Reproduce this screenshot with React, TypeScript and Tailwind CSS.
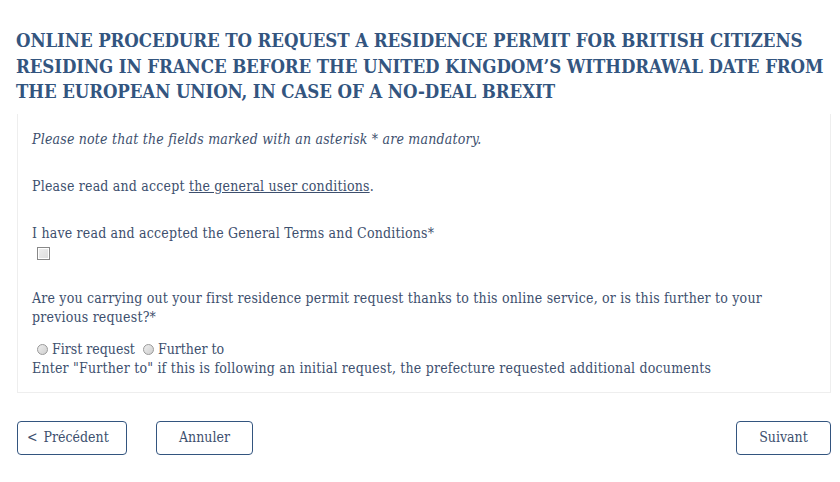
import React from "react";

const font = { fontFamily: '"Roboto Slab", "DejaVu Serif Condensed", "DejaVu Serif", serif' };

export default function App() {
  return (
    <div className="w-[840px] h-[482px] bg-white text-[#3d4f6e]" style={font}>
      <div className="pl-4 pr-[4px] pt-[28px]">
        <h1 className="text-[18.5px] leading-[25.5px] font-bold text-[#33557f] tracking-[-0.1px]">
          ONLINE PROCEDURE TO REQUEST A RESIDENCE PERMIT FOR BRITISH CITIZENS RESIDING IN FRANCE BEFORE THE UNITED KINGDOM’S WITHDRAWAL DATE FROM THE EUROPEAN UNION, IN CASE OF A NO-DEAL BREXIT
        </h1>
      </div>
      <div className="ml-[17px] mr-[9px] mt-[9px] border-x border-b border-[#eeeeee] px-[14px] pt-[16px] pb-[14px] text-[14px] leading-[19px] tracking-[0.2px]">
        <p className="italic">Please note that the fields marked with an asterisk * are mandatory.</p>
        <p className="mt-[28px]">
          Please read and accept <span className="underline">the general user conditions</span>.
        </p>
        <div className="mt-[28px]">
          <div>I have read and accepted the General Terms and Conditions*</div>
          <div className="mt-[4px] ml-[5px] w-[13px] h-[13px] border border-[#888] bg-gradient-to-br from-[#f0f0f0] to-[#dcdcdc] shadow-[inset_0_0_0_1px_#fff]"></div>
        </div>
        <div className="mt-[29px]">
          <div>Are you carrying out your first residence permit request thanks to this online service, or is this further to your previous request?*</div>
          <div className="mt-[13px] flex items-center ml-[5px] tracking-normal">
            <span className="inline-block w-[11px] h-[11px] rounded-full border border-[#999] bg-gradient-to-br from-[#eee] to-[#cfcfcf] mr-[4px]"></span>
            <span>First request</span>
            <span className="inline-block w-[11px] h-[11px] rounded-full border border-[#999] bg-gradient-to-br from-[#eee] to-[#cfcfcf] ml-[8px] mr-[4px]"></span>
            <span>Further to</span>
          </div>
          <div>Enter "Further to" if this is following an initial request, the prefecture requested additional documents</div>
        </div>
      </div>
      <div className="flex items-center mt-[28px] px-[17px] pr-[9px]">
        <button className="h-[34px] w-[110px] border border-[#33557f] rounded-[4px] text-[14px] text-[#3d4f6e] flex items-center pl-[9px]" style={font}>
          <span className="mr-[6px]">&lt;</span>Précédent
        </button>
        <button className="ml-[29px] h-[34px] w-[97px] border border-[#33557f] rounded-[4px] text-[14px] text-[#3d4f6e]" style={font}>
          Annuler
        </button>
        <div className="flex-1" />
        <button className="h-[34px] w-[95px] border border-[#33557f] rounded-[4px] text-[14px] text-[#3d4f6e]" style={font}>
          Suivant
        </button>
      </div>
    </div>
  );
}
